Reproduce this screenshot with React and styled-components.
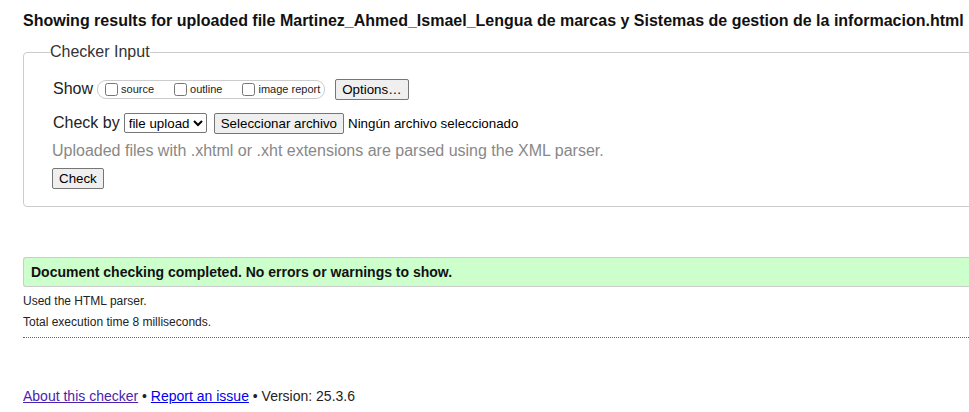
import React from 'react'
import styled, { createGlobalStyle } from 'styled-components'

const GlobalStyle = createGlobalStyle`
  html, body {
    margin: 0;
    padding: 0;
    overflow: hidden;
    background: #fff;
  }
  body {
    font-family: "Liberation Sans", Arial, sans-serif;
    color: #000;
  }
`

const Page = styled.div`
  width: 1000px;
  padding: 0 0 0 23px;
`

const Heading = styled.h2`
  margin: 12px 0 0;
  font-size: 16px;
  line-height: 18px;
  font-weight: bold;
  color: #111;
  white-space: nowrap;
`

const Fieldset = styled.fieldset`
  margin: 13px 0 0;
  padding: 17px 0 17px 28px;
  border: 1px solid #ccc;
  border-radius: 4px;
  min-width: 0;
`

const Legend = styled.legend`
  padding: 0;
  margin-left: -2px;
  font-size: 16px;
  line-height: 18px;
  color: #333;
`

const Row = styled.div`
  display: flex;
  align-items: center;
  height: ${(p) => p.$h || 22}px;
  margin-top: ${(p) => p.$mt || 0}px;
  font-size: 16px;
  color: #222;
`

const Label = styled.span`
  margin-left: 1px;
  margin-right: 4px;
`

const Pill = styled.span`
  display: inline-flex;
  align-items: center;
  height: 17px;
  padding: 0 4px 0 3px;
  border: 1px solid #ccc;
  border-radius: 9px;
  margin-right: 10px;
  gap: 16px;
`

const CheckItem = styled.label`
  display: inline-flex;
  align-items: center;
  font-size: 11px;
  color: #222;

  input {
    margin: 0 3px 0 4px;
    width: 13px;
    height: 13px;
  }
`

const Button = styled.button`
  font-family: "Liberation Sans", Arial, sans-serif;
  font-size: 13.333px;
  padding: 1px 6px;
  height: ${(p) => p.$h || 21}px;
  color: #000;
  background: #efefef;
  border: 1px solid #767676;
  border-radius: 2px;
`

const Select = styled.select`
  font-family: "Liberation Sans", Arial, sans-serif;
  font-size: 13.333px;
  height: 20px;
  margin-right: 7px;
  color: #000;
  border: 1px solid #767676;
  border-radius: 2px;
  background: #fff;
`

const FileName = styled.span`
  font-size: 13.333px;
  color: #000;
  margin-left: 4px;
`

const Hint = styled.p`
  margin: 7px 0 0;
  font-size: 16px;
  line-height: 20px;
  color: #888;
`

const Success = styled.div`
  margin-top: 50px;
  height: 28px;
  display: flex;
  align-items: center;
  padding-left: 7px;
  background: #cfc;
  border: 1px solid #ccc;
  border-right: none;
  border-radius: 3px 0 0 3px;
  font-size: 14px;
  font-weight: bold;
  color: #111;
`

const Details = styled.div`
  padding: 4px 0 4px;
  border-bottom: 1px dotted #666;
  font-size: 12px;
  color: #222;

  p {
    margin: 0;
    line-height: 21px;
  }
`

const Footer = styled.p`
  margin: 50px 0 0;
  font-size: 14px;
  line-height: 16px;
  color: #222;
`

const Link = styled.a`
  color: ${(p) => (p.$visited ? '#4a22b0' : '#0000ee')};
  text-decoration: underline;
`

export default function App() {
  return (
    <Page>
      <GlobalStyle />
      <Heading>
        Showing results for uploaded file Martinez_Ahmed_Ismael_Lengua de marcas y Sistemas de gestion de la informacion.html
      </Heading>

      <Fieldset>
        <Legend>Checker Input</Legend>
        <Row>
          <Label>Show</Label>
          <Pill>
            <CheckItem>
              <input type="checkbox" />
              source
            </CheckItem>
            <CheckItem>
              <input type="checkbox" />
              outline
            </CheckItem>
            <CheckItem>
              <input type="checkbox" />
              image report
            </CheckItem>
          </Pill>
          <Button>Options…</Button>
        </Row>
        <Row $mt={12}>
          <Label>Check by</Label>
          <Select defaultValue="file">
            <option value="file">file upload</option>
          </Select>
          <Button>Seleccionar archivo</Button>
          <FileName>Ningún archivo seleccionado</FileName>
        </Row>
        <Hint>Uploaded files with .xhtml or .xht extensions are parsed using the XML parser.</Hint>
        <Row $mt={7} $h={21}>
          <Button>Check</Button>
        </Row>
      </Fieldset>

      <Success>Document checking completed. No errors or warnings to show.</Success>
      <Details>
        <p>Used the HTML parser.</p>
        <p>Total execution time 8 milliseconds.</p>
      </Details>

      <Footer>
        <Link href="#" $visited>About this checker</Link> • <Link href="#">Report an issue</Link> • Version: 25.3.6
      </Footer>
    </Page>
  )
}
